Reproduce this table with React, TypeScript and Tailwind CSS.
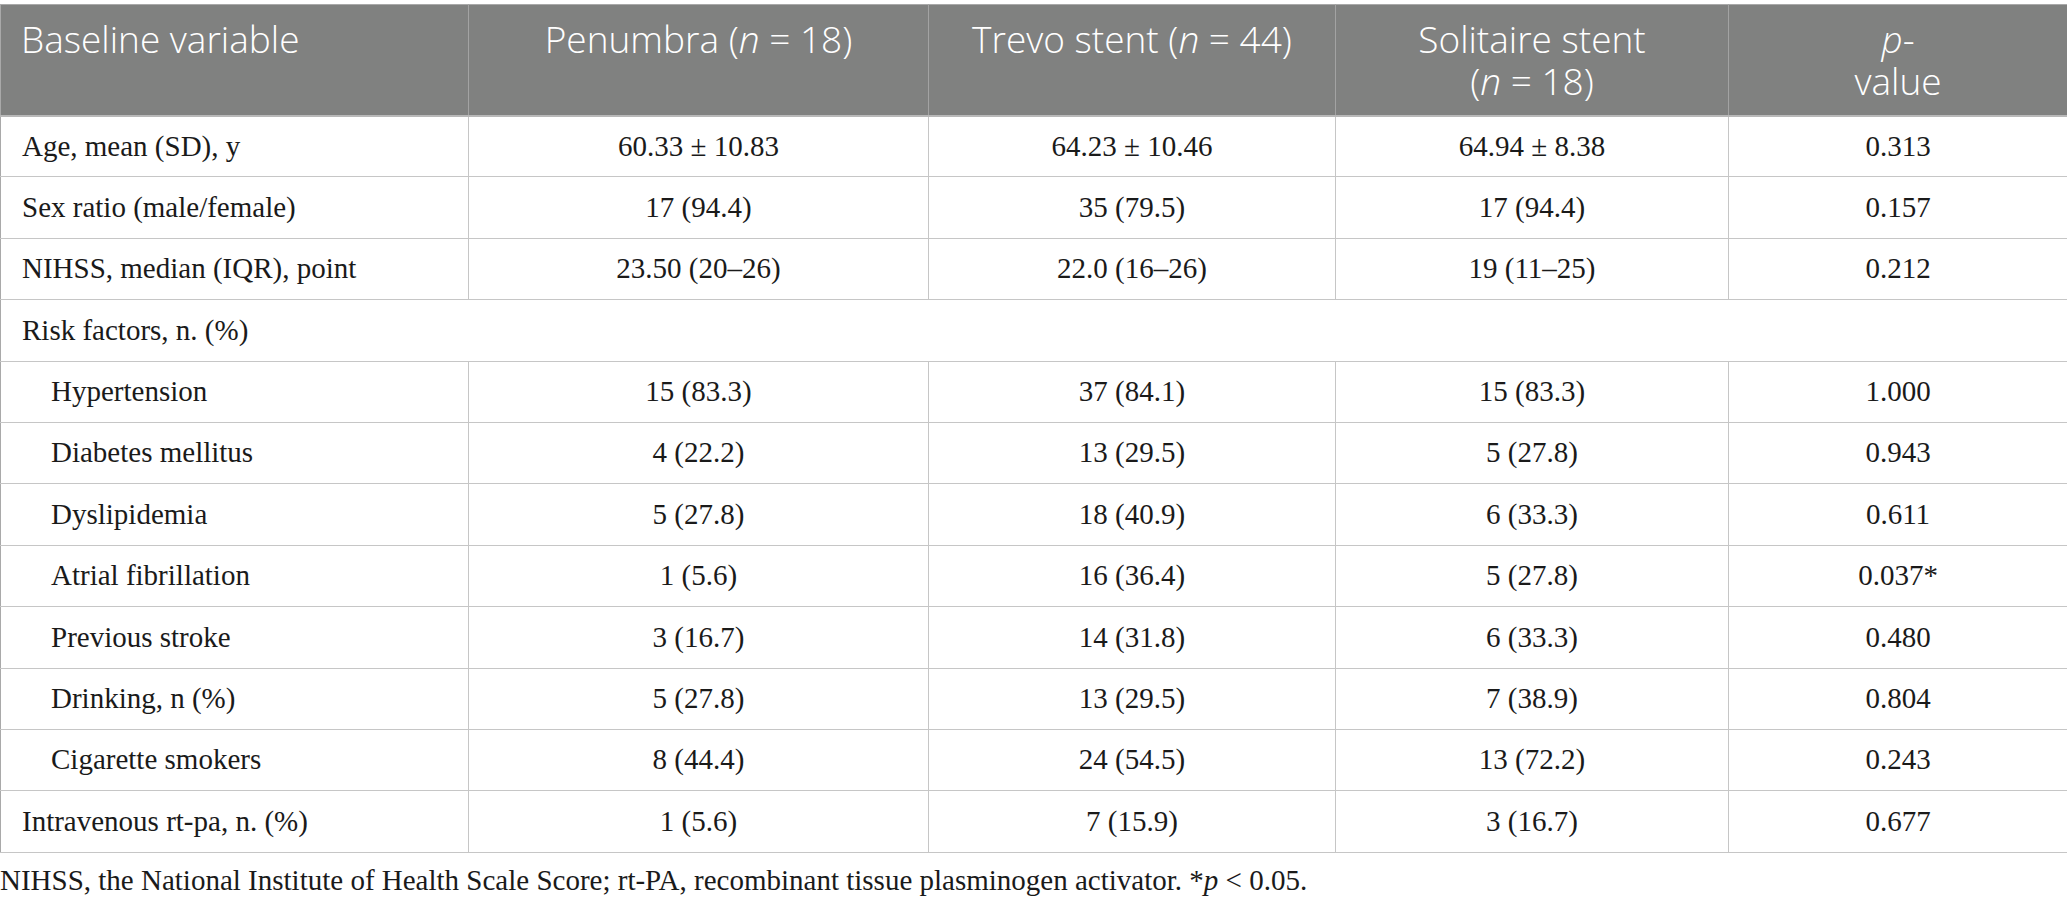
import React from 'react';

type Row = { label: string; indent?: boolean; span?: boolean; cells?: string[] };

const rows: Row[] = [
  { label: 'Age, mean (SD), y', cells: ['60.33 ± 10.83', '64.23 ± 10.46', '64.94 ± 8.38', '0.313'] },
  { label: 'Sex ratio (male/female)', cells: ['17 (94.4)', '35 (79.5)', '17 (94.4)', '0.157'] },
  { label: 'NIHSS, median (IQR), point', cells: ['23.50 (20–26)', '22.0 (16–26)', '19 (11–25)', '0.212'] },
  { label: 'Risk factors, n. (%)', span: true },
  { label: 'Hypertension', indent: true, cells: ['15 (83.3)', '37 (84.1)', '15 (83.3)', '1.000'] },
  { label: 'Diabetes mellitus', indent: true, cells: ['4 (22.2)', '13 (29.5)', '5 (27.8)', '0.943'] },
  { label: 'Dyslipidemia', indent: true, cells: ['5 (27.8)', '18 (40.9)', '6 (33.3)', '0.611'] },
  { label: 'Atrial fibrillation', indent: true, cells: ['1 (5.6)', '16 (36.4)', '5 (27.8)', '0.037*'] },
  { label: 'Previous stroke', indent: true, cells: ['3 (16.7)', '14 (31.8)', '6 (33.3)', '0.480'] },
  { label: 'Drinking, n (%)', indent: true, cells: ['5 (27.8)', '13 (29.5)', '7 (38.9)', '0.804'] },
  { label: 'Cigarette smokers', indent: true, cells: ['8 (44.4)', '24 (54.5)', '13 (72.2)', '0.243'] },
  { label: 'Intravenous rt-pa, n. (%)', cells: ['1 (5.6)', '7 (15.9)', '3 (16.7)', '0.677'] },
];

export default function App() {
  return (
    <div className="w-[2067px] h-[906px] bg-white overflow-hidden pt-[4px]">
      <table className="w-[2067px] table-fixed border-collapse border border-[#a9a9a9]">
        <colgroup>
          <col className="w-[468px]" />
          <col className="w-[460px]" />
          <col className="w-[407px]" />
          <col className="w-[393px]" />
          <col className="w-[339px]" />
        </colgroup>
        <thead>
          <tr className="bg-[#808180] text-white font-['Open_Sans',sans-serif] font-light text-[37px] leading-[42px]">
            <th className="h-[111px] align-top text-left font-light px-[20px] pt-[13px] border-r border-[#a3a3a3] border-b-2 border-b-[#b8b8b8]">
              Baseline variable
            </th>
            <th className="align-top text-center font-light pt-[13px] border-r border-[#a3a3a3] border-b-2 border-b-[#b8b8b8]">
              Penumbra (<i>n</i> = 18)
            </th>
            <th className="align-top text-center font-light pt-[13px] border-r border-[#a3a3a3] border-b-2 border-b-[#b8b8b8]">
              Trevo stent (<i>n</i> = 44)
            </th>
            <th className="align-top text-center font-light pt-[13px] border-r border-[#a3a3a3] border-b-2 border-b-[#b8b8b8]">
              Solitaire stent
              <br />
              (<i>n</i> = 18)
            </th>
            <th className="align-top text-center font-light pt-[13px] border-b-2 border-b-[#b8b8b8]">
              <i>p</i>-
              <br />
              value
            </th>
          </tr>
        </thead>
        <tbody className="font-['Liberation_Serif',serif] text-[29px] text-[#1a1a1a]">
          {rows.map((r) =>
            r.span ? (
              <tr key={r.label} className="border-b border-[#c6c6c6]">
                <td colSpan={5} className="h-[61.4px] px-[21px] align-middle">
                  {r.label}
                </td>
              </tr>
            ) : (
              <tr key={r.label} className="border-b border-[#c6c6c6]">
                <td className={`h-[61.4px] align-middle border-r border-[#c6c6c6] ${r.indent ? 'pl-[50px]' : 'pl-[21px]'}`}>
                  {r.label}
                </td>
                {r.cells!.map((c, i) => (
                  <td key={i} className="text-center align-middle border-r border-[#c6c6c6]">
                    {c}
                  </td>
                ))}
              </tr>
            )
          )}
        </tbody>
      </table>
      <p className="mt-[11px] font-['Liberation_Serif',serif] text-[29px] text-[#1a1a1a] leading-[32px]">
        NIHSS, the National Institute of Health Scale Score; rt-PA, recombinant tissue plasminogen activator. *<i>p</i> &lt; 0.05.
      </p>
    </div>
  );
}
